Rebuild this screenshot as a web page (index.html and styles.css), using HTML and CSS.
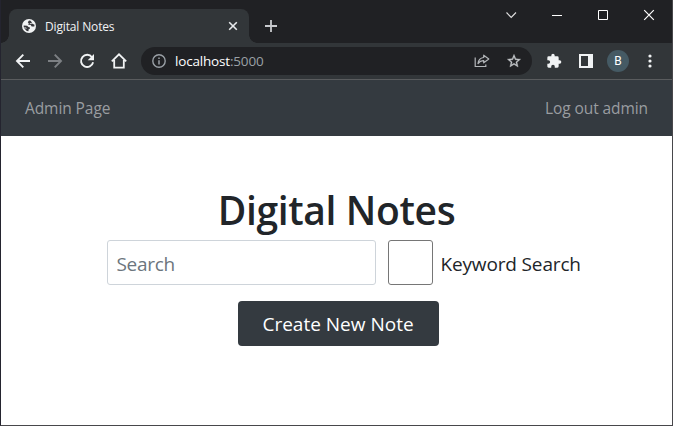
FILE: index.html
```html
<!DOCTYPE html>
<html lang="en">
<head>
<meta charset="utf-8">
<title>Digital Notes</title>
<link rel="stylesheet" href="styles.css">
</head>
<body>
<div class="window">
  <header class="tabstrip">
    <div class="tab">
      <svg class="globe" width="14" height="14" viewBox="0 0 14 14"><circle cx="7" cy="7" r="7" fill="#f1f3f4"/><path d="M7 1.600L5.800 3.200l1 1.300-.6 1.300 2.500.2 1 1.400 2.600.2.200-1.800L10 4.600 9.600 3 8.500 1.800zM1.700 6.500l3.400.3 1.400 1.300 1.500.3-.2 1.400-1.300.7v1.700l-1.700-.3-1.900-1.900L1.700 8z" fill="#35363a"/><path d="M7.800 4.700l2-.2M2.500 8.600l2 .7" stroke="#f1f3f4" stroke-width=".9"/></svg>
      <span class="tab-title">Digital Notes</span>
      <svg class="tab-close" width="10" height="10" viewBox="0 0 10 10"><path d="M1.200 1.200l7.600 7.600M8.800 1.200L1.200 8.800" stroke="#e8eaed" stroke-width="1.600"/></svg>
    </div>
    <svg class="new-tab" width="12" height="12" viewBox="0 0 12 12"><path d="M6 0v12M0 6h12" stroke="#c8cace" stroke-width="1.800"/></svg>
    <div class="controls">
      <svg width="46" height="30" viewBox="0 0 46 30"><path d="M18.500 12.500l4.700 5 4.800-5" fill="none" stroke="#e0e0e0" stroke-width="1.100"/></svg>
      <svg width="46" height="30" viewBox="0 0 46 30"><path d="M18 15.500h10" stroke="#fff"/></svg>
      <svg width="46" height="30" viewBox="0 0 46 30"><path d="M18.500 10.500h9v9h-9z" fill="none" stroke="#fff"/></svg>
      <svg width="46" height="30" viewBox="0 0 46 30"><path d="M18.200 10.200l9.600 9.600M27.800 10.200l-9.600 9.600" stroke="#fff" stroke-width="1.200"/></svg>
    </div>
  </header>
  <div class="toolbar">
    <div class="nav-icons">
      <svg width="16" height="16" viewBox="0 0 16 16"><path d="M15 8H2M8.300 1.700L2 8l6.300 6.300" fill="none" stroke="#f1f3f4" stroke-width="1.900"/></svg>
      <svg width="16" height="16" viewBox="0 0 16 16"><path d="M1 8h13M7.700 1.700L14 8l-6.300 6.300" fill="none" stroke="#7d8084" stroke-width="1.900"/></svg>
      <svg width="16" height="16" viewBox="0 0 16 16"><path d="M13 4.200A6.100 6.100 0 1 0 14.100 9.200" fill="none" stroke="#f1f3f4" stroke-width="1.900"/><path d="M15 1v6.300H8.700z" fill="#f1f3f4"/></svg>
      <svg width="16" height="16" viewBox="0 0 16 16"><path d="M.8 8.300L8 1.300l7.200 7M3.200 7v7.700h9.600V7" fill="none" stroke="#f1f3f4" stroke-width="1.800"/></svg>
    </div>
    <div class="omnibox">
      <svg width="14" height="14" viewBox="0 0 14 14"><circle cx="7" cy="7" r="6.200" fill="none" stroke="#9aa0a6" stroke-width="1.400"/><path d="M7 6.200v4.300M7 3.500V5" stroke="#9aa0a6" stroke-width="1.500"/></svg>
      <span class="url">localhost<span class="port">:5000</span></span>
      <svg class="share" width="16" height="14" viewBox="0 0 16 14"><path d="M1.200 3.500v9h10.600v-2" fill="none" stroke="#b3b6b9" stroke-width="1.200"/><path d="M9.700 1.200L14.800 5 9.700 8.800V6.700C7.200 6.500 5.500 7.500 4 9.600c.3-3.300 2.200-5.600 5.700-6.100z" fill="none" stroke="#b3b6b9" stroke-width="1.200" stroke-linejoin="round"/></svg>
      <svg class="star" width="16" height="16" viewBox="0 0 24 24"><path d="M22 9.240l-7.190-.62L12 2 9.190 8.630 2 9.240l5.460 4.730L5.820 21 12 17.270 18.180 21l-1.630-7.030zM12 15.400l-3.760 2.270 1-4.280-3.320-2.880 4.380-.38L12 6.100l1.710 4.040 4.380.38-3.320 2.880 1 4.280z" fill="#c4c7ca" stroke="#c4c7ca" stroke-width=".5"/></svg>
    </div>
    <svg class="puzzle" width="16" height="16" viewBox="0 0 24 24"><path d="M20.500 11H19V7a2 2 0 0 0-2-2h-4V3.500a2.500 2.500 0 0 0-5 0V5H4a2 2 0 0 0-2 2v3.800h1.500a2.700 2.700 0 0 1 0 5.400H2V20c0 1.100.9 2 2 2h3.800v-1.500a2.700 2.700 0 0 1 5.400 0V22H17a2 2 0 0 0 2-2v-4h1.500a2.500 2.500 0 0 0 0-5z" fill="#f1f3f4"/></svg>
    <svg class="panel" width="14" height="14" viewBox="0 0 14 14"><path d="M0 0h14v14H0zM2 2v10h7V2z" fill="#f1f3f4" fill-rule="evenodd"/></svg>
    <span class="avatar">B</span>
    <svg class="more" width="4" height="14" viewBox="0 0 4 14"><g fill="#f1f3f4"><circle cx="2" cy="2" r="1.600"/><circle cx="2" cy="7" r="1.600"/><circle cx="2" cy="12" r="1.600"/></g></svg>
  </div>
  <nav class="navbar"><a class="admin">Admin Page</a><a class="logout">Log out admin</a></nav>
  <main>
    <h1>Digital Notes</h1>
    <form class="search-row">
      <input class="search" type="text" placeholder="Search" aria-label="Search">
      <input class="check" type="checkbox" id="keyword">
      <label for="keyword">Keyword Search</label>
    </form>
    <button class="create" type="button">Create New Note</button>
  </main>
</div>
</body>
</html>
```
FILE: styles.css
```css
* { box-sizing: border-box; }
body { margin: 0; font-family: "Open Sans", "Noto Sans", sans-serif; color: #212529; }
svg { display: block; flex: none; }
.window { width: 673px; height: 426px; border: 1px solid #48474b; border-left-color: #24242f; border-top: 0; background: #fff; overflow: hidden; white-space: nowrap; }
.tabstrip { height: 43px; background: #202124; display: flex; align-items: flex-start; }
.tab { position: relative; width: 240px; height: 34px; margin: 9px 0 0 8px; padding: 0 11px 0 13px; border-radius: 8px 8px 0 0; background: #323639; display: flex; align-items: center; }
.tab::before, .tab::after { content: ""; position: absolute; bottom: 0; width: 8px; height: 8px; }
.tab::before { left: -8px; background: radial-gradient(circle at 0 0, transparent 7.5px, #323639 8px); }
.tab::after { right: -8px; background: radial-gradient(circle at 100% 0, transparent 7.5px, #323639 8px); }
.tab-title { margin-left: 9px; font-size: 12px; letter-spacing: -.15px; color: #f1f3f4; }
.tab-close { margin-left: auto; }
.new-tab { margin: 20px 0 0 16px; }
.controls { display: flex; margin-left: auto; }
.toolbar { height: 37px; background: #323639; border-bottom: 1px solid #5a5c5e; display: flex; align-items: center; }
.nav-icons { display: flex; gap: 16px; margin-left: 14px; }
.omnibox { width: 391px; height: 28px; margin-left: 14px; padding: 0 10px 0 11px; border-radius: 14px; background: #202124; display: flex; align-items: center; }
.url { margin-left: 9px; font-size: 13.5px; letter-spacing: -.18px; color: #fff; }
.port { color: #9aa0a6; }
.share { margin-left: auto; }
.star { margin-left: 16px; }
.puzzle { margin-left: 14px; }
.panel { margin-left: 17px; }
.avatar { width: 22px; height: 22px; margin-left: 14px; border-radius: 50%; background: #455a64; color: #fff; font: 12px/22px Roboto, sans-serif; text-align: center; }
.more { margin-left: 19px; }
.navbar { height: 56px; padding: 0 24px; background: #343a40; color: #9a9da0; font-size: 15.5px; display: flex; align-items: center; justify-content: space-between; }
.admin, .logout { letter-spacing: -.08px; }
main { display: flex; flex-direction: column; align-items: center; padding-top: 50px; }
h1 { margin: 0 0 6px; font-size: 39px; line-height: 48px; font-weight: 570; letter-spacing: -.35px; }
.search-row { width: 474px; margin-left: 14px; display: flex; align-items: center; }
.search { flex: none; width: 269px; height: 45px; padding: 3px 8px 0 9px; border: 1px solid #ced4da; border-radius: 3px; font: 19px "Open Sans", sans-serif; letter-spacing: -.3px; }
.search::placeholder { color: #6c757d; opacity: 1; }
.check { flex: none; appearance: none; width: 45px; height: 45px; margin: 0 0 0 12px; border: 1px solid #767676; border-radius: 3px; background: #fff; }
label { margin-left: 8px; padding-top: 2px; font-size: 19px; letter-spacing: -.15px; }
.create { width: 201px; height: 45px; margin: 16px 0 0 3px; padding: 0; border: 0; border-radius: 4px; background: #343a40; color: #fff; font: 19px "Open Sans", sans-serif; }
```
